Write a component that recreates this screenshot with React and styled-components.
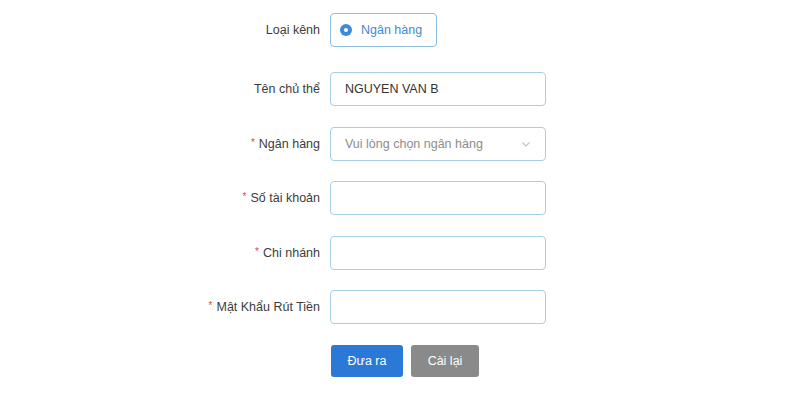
import React from "react";
import styled, { createGlobalStyle } from "styled-components";

const GlobalStyle = createGlobalStyle`
  html, body {
    margin: 0;
    padding: 0;
    background: #ffffff;
    font-family: "Liberation Sans", Arial, sans-serif;
  }
`;

const Page = styled.div`
  width: 800px;
  height: 400px;
  padding-top: 13px;
  box-sizing: border-box;
`;

const Form = styled.form`
  display: flex;
  flex-direction: column;
  gap: 20.5px;
`;

const Row = styled.div`
  display: grid;
  grid-template-columns: 320px 216px;
  column-gap: 10px;
  align-items: center;
  height: 34px;
  margin-bottom: ${(p) => p.$extra || 0}px;
`;

const Label = styled.label`
  text-align: right;
  font-size: 12.5px;
  color: #3c3c3c;
  white-space: nowrap;
`;

const Star = styled.span`
  color: #e0473f;
  font-size: 10px;
  margin-right: 4px;
  position: relative;
  top: -2px;
`;

const RadioBox = styled.div`
  width: 107px;
  height: 34px;
  box-sizing: border-box;
  border: 1px solid #8fbde2;
  border-radius: 4px;
  display: flex;
  align-items: center;
  padding-left: 9px;
  gap: 9px;
  font-size: 12.5px;
  color: #3f8ad6;
`;

const Dot = styled.span`
  width: 12px;
  height: 12px;
  border-radius: 50%;
  background: #3f8ad6;
  display: flex;
  align-items: center;
  justify-content: center;

  &::after {
    content: "";
    width: 4px;
    height: 4px;
    border-radius: 50%;
    background: #ffffff;
  }
`;

const Field = styled.div`
  height: 34px;
  box-sizing: border-box;
  border: 1px solid #a6cfe6;
  border-radius: 4px;
  display: flex;
  align-items: center;
  justify-content: space-between;
  padding: 0 14px 0 14px;
  font-size: 12.5px;
  color: ${(p) => (p.$placeholder ? "#8c8c8c" : "#333333")};
`;

const Chevron = styled.svg`
  width: 10px;
  height: 10px;
  stroke: #c0c4cc;
  fill: none;
  stroke-width: 1.2;
`;

const Buttons = styled.div`
  display: flex;
  gap: 8px;
  padding-left: 331px;
`;

const Button = styled.button`
  width: ${(p) => p.$w}px;
  height: 32px;
  border: none;
  border-radius: 3px;
  background: ${(p) => p.$bg};
  color: #ffffff;
  font-family: "Liberation Sans", Arial, sans-serif;
  font-size: 12.5px;
  padding: 0;
`;

function Req() {
  return <Star>*</Star>;
}

export default function App() {
  return (
    <Page>
      <GlobalStyle />
      <Form onSubmit={(e) => e.preventDefault()}>
        <Row $extra={4.5}>
          <Label>Loại kênh</Label>
          <RadioBox>
            <Dot />
            Ngân hàng
          </RadioBox>
        </Row>
        <Row>
          <Label>Tên chủ thể</Label>
          <Field>NGUYEN VAN B</Field>
        </Row>
        <Row>
          <Label>
            <Req />Ngân hàng
          </Label>
          <Field $placeholder>
            Vui lòng chọn ngân hàng
            <Chevron viewBox="0 0 10 10">
              <path d="M1.5 3.5 L5 7 L8.5 3.5" />
            </Chevron>
          </Field>
        </Row>
        <Row>
          <Label>
            <Req />Số tài khoản
          </Label>
          <Field />
        </Row>
        <Row>
          <Label>
            <Req />Chi nhánh
          </Label>
          <Field />
        </Row>
        <Row>
          <Label>
            <Req />Mật Khẩu Rút Tiền
          </Label>
          <Field />
        </Row>
        <Buttons>
          <Button type="submit" $w={72} $bg="#2b79d7">
            Đưa ra
          </Button>
          <Button type="reset" $w={68} $bg="#8a8a8a">
            Cài lại
          </Button>
        </Buttons>
      </Form>
    </Page>
  );
}
